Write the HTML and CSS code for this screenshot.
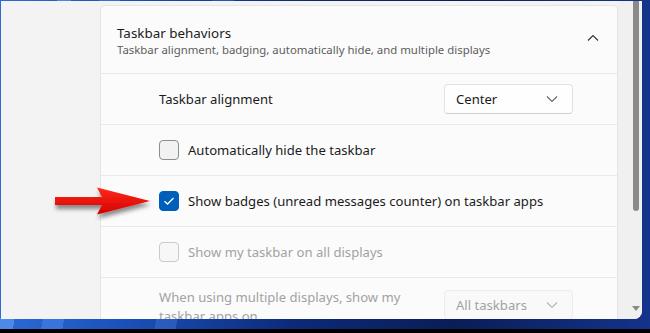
FILE: index.html
```html
<!doctype html>
<html>
  <head>
    <title>Taskbar behaviors</title>
    <meta name="viewport" content="width=device-width, initial-scale=1.0" />
    <link rel="stylesheet" href="styles.css">
  </head>
  <body>
    <div class="screen">
      <div class="window">
        <div class="content">
          <div class="card">
            <div class="card-header">
              <div>
                <div class="title">Taskbar behaviors</div>
                <div class="subtitle">Taskbar alignment, badging, automatically hide, and multiple displays</div>
              </div>
              <svg class="chevron-up" width="12" height="8" viewBox="0 0 12 8">
                <path d="M1 6.5 L6 1.5 L11 6.5" fill="none" stroke="#333" stroke-width="1.1" />
              </svg>
            </div>

            <div class="row">
              <span class="label">Taskbar alignment</span>
              <div class="select">
                <span>Center</span>
                <svg width="12" height="8" viewBox="0 0 12 8">
                  <path d="M1 1.5 L6 6.5 L11 1.5" fill="none" stroke="#666" stroke-width="1.1" />
                </svg>
              </div>
            </div>

            <div class="row">
              <label class="check">
                <span class="box"></span>
                Automatically hide the taskbar
              </label>
            </div>

            <div class="row">
              <label class="check">
                <span class="box checked">
                  <svg width="12" height="10" viewBox="0 0 12 10">
                    <path d="M1.5 5.2 L4.6 8 L10.5 2" fill="none" stroke="#fff" stroke-width="1.3" />
                  </svg>
                </span>
                Show badges (unread messages counter) on taskbar apps
              </label>
              <svg class="arrow" width="110" height="40" viewBox="0 0 110 40">
                <defs>
                  <filter id="shadow" x="-20%" y="-40%" width="140%" height="180%">
                    <feDropShadow dx="1" dy="4" stdDeviation="2.2" flood-color="#000" flood-opacity="0.45" />
                  </filter>
                  <linearGradient id="red" x1="0" y1="0" x2="0" y2="1">
                    <stop offset="0" stop-color="#ff2a1a" />
                    <stop offset="1" stop-color="#d40000" />
                  </linearGradient>
                </defs>
                <path d="M10 16 L57 16 L52 6.5 L105 20 L52 33.5 L57 24 L10 24 Z" fill="url(#red)" filter="url(#shadow)" />
              </svg>
            </div>

            <div class="row disabled">
              <label class="check">
                <span class="box"></span>
                Show my taskbar on all displays
              </label>
            </div>

            <div class="row last disabled">
              <span class="label">When using multiple displays, show my taskbar apps on</span>
              <div class="select">
                <span>All taskbars</span>
                <svg width="12" height="8" viewBox="0 0 12 8">
                  <path d="M1 1.5 L6 6.5 L11 1.5" fill="none" stroke="#b5b5b5" stroke-width="1.1" />
                </svg>
              </div>
            </div>
          </div>
        </div>
        <div class="scrollbar">
          <div class="thumb"></div>
          <div class="down"></div>
        </div>
      </div>
    </div>
  </body>
</html>
```

FILE: styles.css
```css
body {
  margin: 0;
  padding: 0;
  background-color: #000;
  font-family: "Noto Sans", "Open Sans", sans-serif;
  color: #1b1b1b;
}

.screen {
  width: 650px;
  height: 331px;
  padding: 1px 0 0 1px;
  box-sizing: border-box;
  overflow: hidden;
  border-bottom: 2px solid #000;
  background:
    linear-gradient(100deg, transparent 0 8%, rgba(90, 150, 240, 0.7) 8% 10%, transparent 10% 14%, rgba(70, 130, 230, 0.6) 14% 17%, transparent 17% 30%, rgba(60, 110, 210, 0.5) 30% 33%, transparent 33%),
    linear-gradient(90deg, #2b6bd6 0%, #1a4fb8 20%, #0d2a78 45%, #0a1d57 70%, #14338a 100%);
}

.window {
  width: 641px;
  height: 318px;
  background-color: #f3f3f3;
  border-radius: 0 0 8px 0;
  display: flex;
  overflow: hidden;
}

.content {
  flex: 1;
  padding: 4px 0 0 99px;
  overflow: hidden;
}

.card {
  background-color: #fbfbfb;
  border: 1px solid #e5e5e5;
  border-bottom: none;
  border-radius: 5px 5px 0 0;
}

.card-header {
  height: 67px;
  display: flex;
  align-items: center;
  justify-content: space-between;
  padding: 0 18px 0 16px;
}

.title {
  font-size: 13.4px;
  line-height: 18px;
  margin-top: 3px;
}

.subtitle {
  font-size: 11.4px;
  line-height: 16px;
  color: #5d5d5d;
}

.chevron-up {
  margin-bottom: 4px;
}

.row {
  position: relative;
  height: 50px;
  border-top: 1px solid #e9e9e9;
  display: flex;
  align-items: center;
  justify-content: space-between;
  padding: 0 44px 0 58px;
  font-size: 13.1px;
}

.row.last {
  align-items: flex-start;
  padding-top: 12px;
  height: 60px;
  box-sizing: border-box;
}

.row.last .label {
  width: 250px;
  line-height: 19px;
  margin-top: -2px;
}

.disabled {
  color: #a2a2a2;
}

.select {
  width: 129px;
  height: 30px;
  box-sizing: border-box;
  border: 1px solid #e2e2e2;
  border-bottom-color: #d0d0d0;
  border-radius: 4px;
  background-color: #fefefe;
  display: flex;
  align-items: center;
  justify-content: space-between;
  padding: 0 14px 0 11px;
}

.disabled .select {
  border-color: #ececec;
  background-color: #f9f9f9;
}

.check {
  display: flex;
  align-items: center;
  gap: 9px;
}

.box {
  width: 18px;
  height: 18px;
  border: 1px solid #8d8d8d;
  border-radius: 4px;
  background-color: #f2f2f2;
  display: flex;
  align-items: center;
  justify-content: center;
}

.box.checked {
  border-color: #005fb8;
  background-color: #005fb8;
}

.disabled .box {
  border-color: #cbcbcb;
  background-color: #f7f7f7;
}

.arrow {
  position: absolute;
  left: -56px;
  top: 5px;
}

.scrollbar {
  width: 24px;
  display: flex;
  flex-direction: column;
  justify-content: space-between;
  align-items: flex-start;
  padding: 0 0 8px 15px;
  box-sizing: border-box;
  background-color: #f0f0f0;
}

.thumb {
  width: 6px;
  height: 210px;
  background-color: #8a8a8a;
  border-radius: 0 0 3px 3px;
}

.down {
  width: 0;
  height: 0;
  margin-left: -1px;
  border-left: 4px solid transparent;
  border-right: 4px solid transparent;
  border-top: 5px solid #8a8a8a;
}
```
